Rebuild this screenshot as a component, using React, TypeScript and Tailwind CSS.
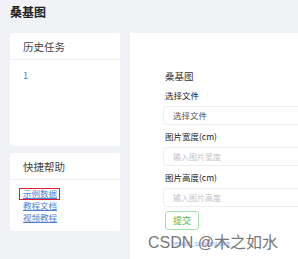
import React from 'react';

const cjk = { fontFamily: '"Noto Sans CJK SC", "Noto Sans", sans-serif' };

const Card: React.FC<{ title: string; className?: string; children: React.ReactNode }> = ({ title, className = '', children }) => (
  <div className={`bg-white rounded-[3px] ${className}`}>
    <div className="h-[27px] flex items-center pt-[2px] px-[13px] border-b border-[#f2f2f2] text-[10.5px] text-[#444]">
      {title}
    </div>
    {children}
  </div>
);

const Field: React.FC<{ label: string; placeholder?: string; value?: string }> = ({ label, placeholder, value }) => (
  <div className="flex flex-col">
    <label className="text-[8.5px] leading-[12px] text-[#222] mb-[5px] pl-[2px]">{label}</label>
    <div className="h-[19px] border border-[#eeeeee] rounded-[3px] flex items-center pl-[9px] w-[200px]">
      {value ? (
        <span className="text-[8.5px] text-[#555]">{value}</span>
      ) : (
        <span className="text-[8px] text-[#c4c4c4]">{placeholder}</span>
      )}
    </div>
  </div>
);

export default function App() {
  return (
    <div className="relative w-[298px] h-[259px] overflow-hidden bg-[#f0f2f5]" style={cjk}>
      <h1 className="pl-[10px] pt-[4px] h-[33px] text-[12px] font-bold text-[#222] leading-[16px]">桑基图</h1>

      <div className="flex gap-[10px] pl-[10px]">
        {/* Left column */}
        <div className="w-[110px] flex flex-col gap-[7px] shrink-0">
          <Card title="历史任务" className="h-[113px]">
            <div className="px-[13px] pt-[9px] text-[9px] text-[#4a7fd4]">1</div>
          </Card>
          <Card title="快捷帮助" className="h-[78px]">
            <div className="flex flex-col px-[13px] pt-[7px] text-[8.5px] leading-[12px] text-[#4a7fd4]">
              <span className="underline w-fit">示例数据</span>
              <span className="underline w-fit">教程文档</span>
              <span className="underline w-fit">视频教程</span>
            </div>
          </Card>
        </div>

        {/* Right panel */}
        <div className="w-[240px] h-[240px] bg-white shrink-0 pl-[33px] pt-[37px]">
          <div className="text-[9.5px] leading-[12px] text-[#333] mb-[7px] pl-[2px]">桑基图</div>
          <div className="flex flex-col gap-[5px]">
            <Field label="选择文件" value="选择文件" />
            <Field label="图片宽度(cm)" placeholder="输入图片宽度" />
            <Field label="图片高度(cm)" placeholder="输入图片高度" />
          </div>
          <button className="mt-[4px] ml-[2px] w-[34px] h-[19px] border border-[#a6e0a6] rounded-[3px] text-[9px] text-[#4cb84c] flex items-center justify-center">
            提交
          </button>
          <div className="mt-[9px] ml-[9px] text-[7px] text-[#7aa8ea] leading-[9px]">result_sankey.svg</div>
        </div>
      </div>

      {/* Red annotation box */}
      <div className="absolute left-[19px] top-[188px] w-[41px] h-[12px] border border-[#e0202a]" />

      {/* Watermark */}
      <div
        className="absolute left-[148px] top-[233px] text-[16px] leading-[20px] text-[#777] whitespace-nowrap"
        style={{ fontFamily: '"Liberation Sans", "Noto Sans CJK SC", sans-serif' }}
      >
        CSDN @木之如水
      </div>
    </div>
  );
}
